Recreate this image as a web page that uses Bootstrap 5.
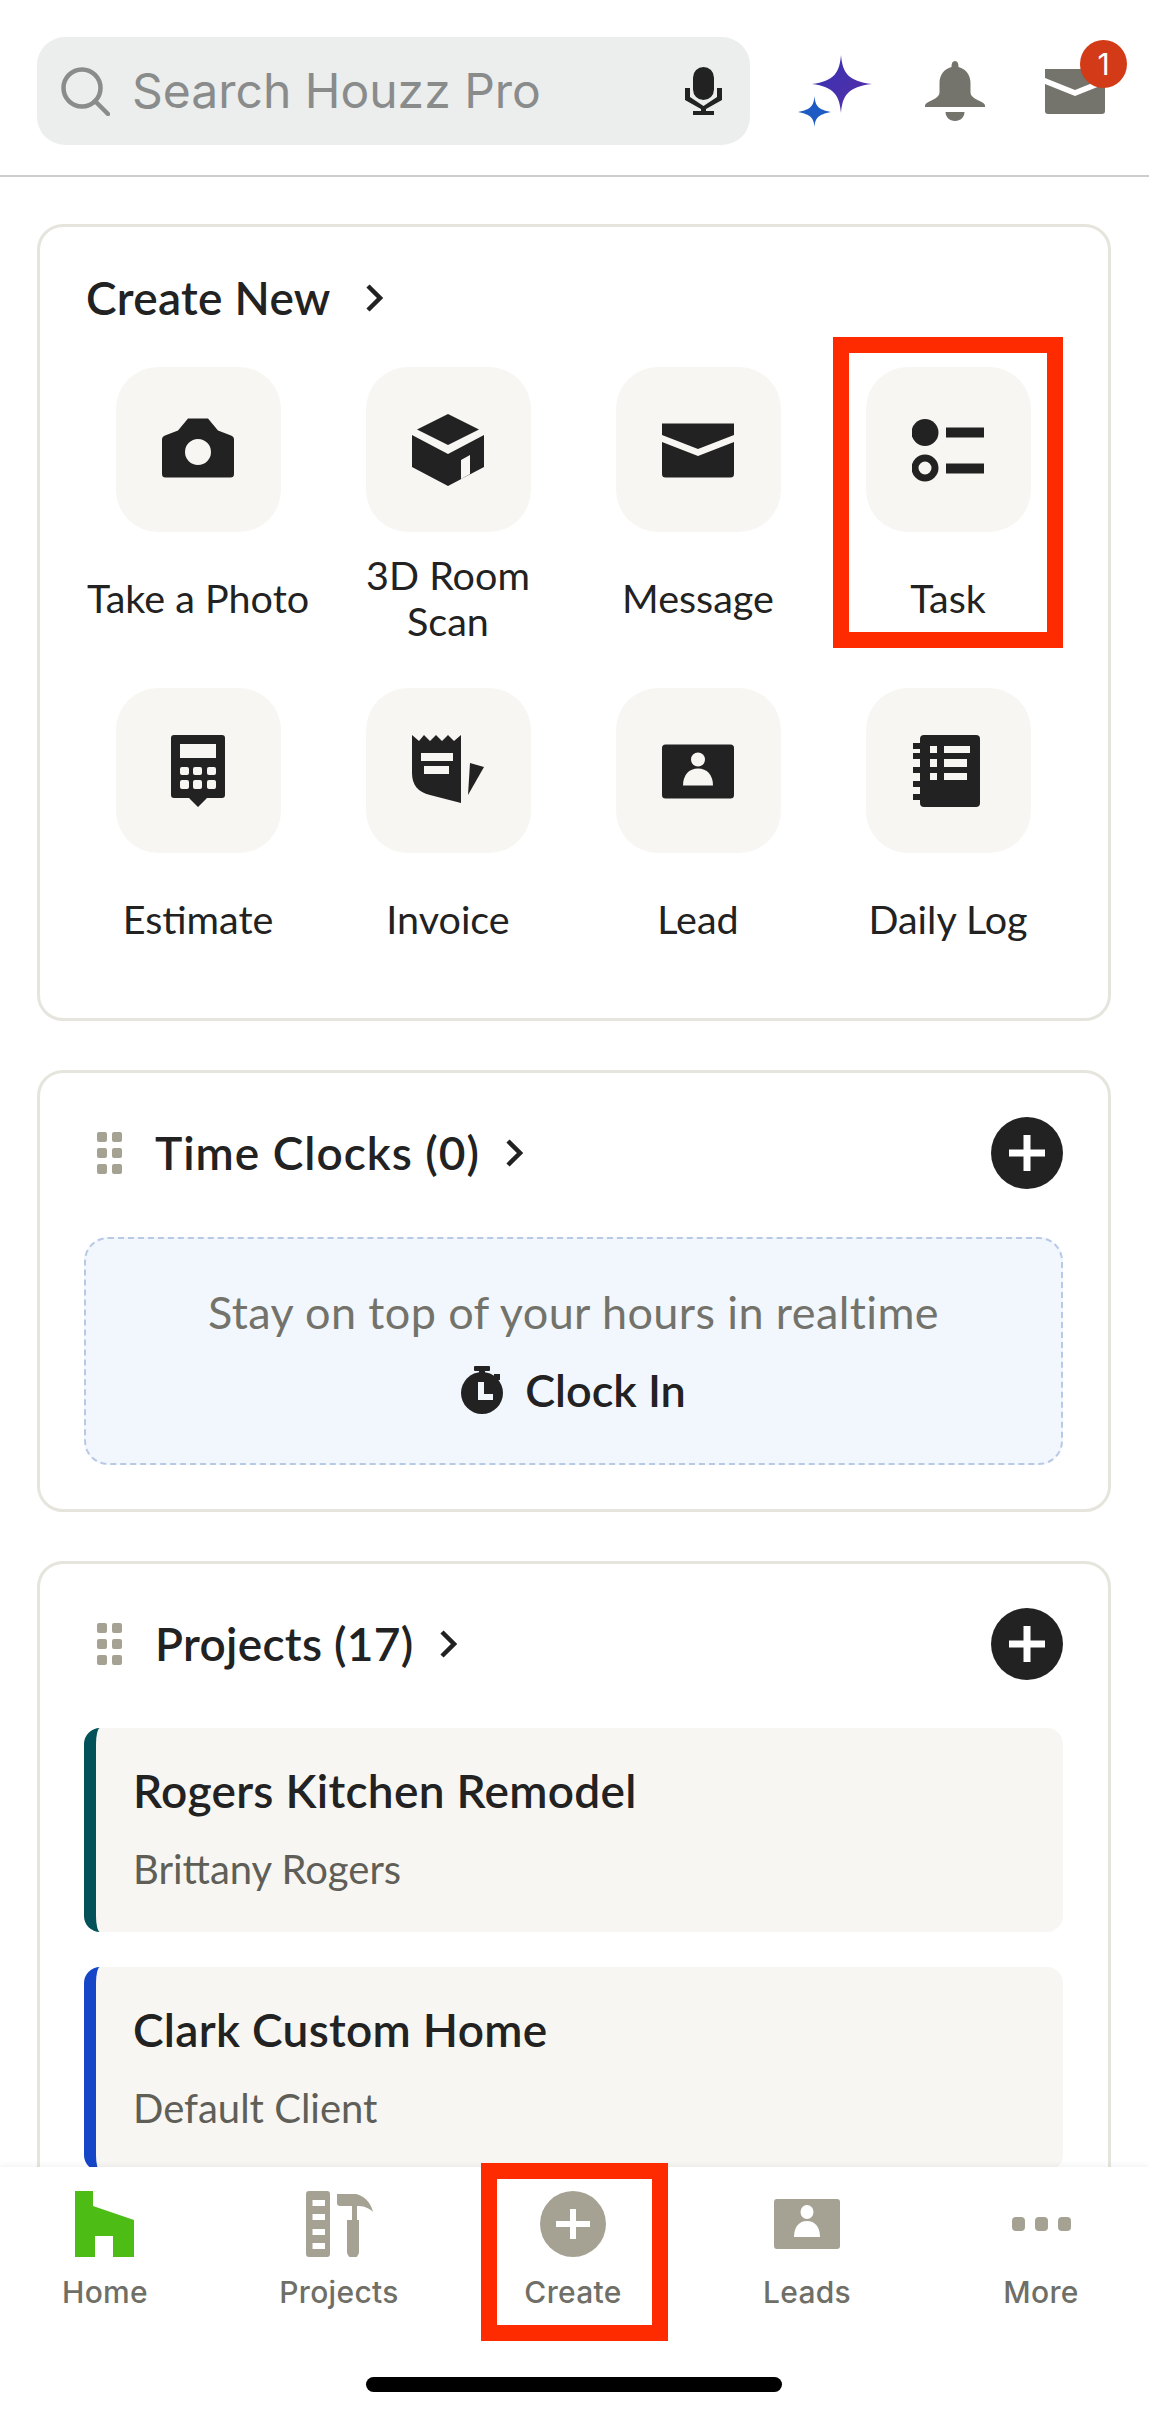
<!DOCTYPE html>
<html lang="en">
<head>
    <meta charset="UTF-8">
    <meta name="viewport" content="width=device-width, initial-scale=1.0">
    <title>Houzz Pro Home</title>
    <link href="https://cdn.jsdelivr.net/npm/bootstrap@5.3.2/dist/css/bootstrap.min.css" rel="stylesheet">
    <style>
        body {
            background-color: #fff;
            color: #222;
            font-family: "Lato", "Liberation Sans", sans-serif;
        }
        .app-shell {
            width: 1149px;
            height: 2409px;
            overflow: hidden;
        }
        /* top bar */
        .top-bar {
            padding: 37px 0 30px 37px;
            border-bottom: 2px solid #cdcdcd;
        }
        .search-box {
            width: 713px;
            height: 108px;
            padding: 0 28px 0 24px;
            background-color: #eceeee;
            border-radius: 28px;
            color: #8a8b8b;
            font-family: "Inter", sans-serif;
            font-size: 48px;
        }
        .search-text { margin-left: 22px; }
        .spark-icon { margin-left: 48px; }
        .bell-icon { margin-left: 53px; }
        .mail-wrap { margin-left: 60px; width: 60px; height: 45px; }
        .mail-wrap svg { display: block; }
        .mail-badge {
            top: -29px;
            left: 35px;
            width: 47px;
            height: 48px;
            background-color: #d33a17;
            color: #fff;
            font-family: "Inter", sans-serif;
            font-size: 30px;
            line-height: 48px;
        }
        /* cards */
        .page-body {
            padding: 47px 38px 0 37px;
            gap: 49px;
        }
        .home-card {
            border: 3px solid #e6e5dd;
            border-radius: 26px;
            flex-shrink: 0;
        }
        .create-card { padding: 41px 44px 9px; }
        .widget-card { padding: 44px 45px 44px 44px; }
        .card-heading {
            font-size: 46px;
            font-weight: 600;
            line-height: 60px;
            letter-spacing: .3px;
            color: #222;
        }
        .clock-heading { letter-spacing: 1px; }
        .create-head { margin-left: 2px; height: 60px; }
        .create-head svg { margin-left: 34px; }
        .action-grid { width: 1000px; margin: 39px 0 0 -11px; }
        .action-item { width: 250px; height: 321px; }
        .action-tile {
            width: 165px;
            height: 165px;
            background-color: #f7f6f2;
            border-radius: 42px;
        }
        .action-label {
            height: 92px;
            margin-top: 20px;
            font-size: 39.5px;
            line-height: 46px;
            text-align: center;
            color: #222;
        }
        .task-mark {
            top: -30px;
            left: 10px;
            width: 230px;
            height: 311px;
            border: 16px solid #ff2b00;
        }
        .grip-icon { margin: 0 33px 0 13px; }
        .head-chevron { margin-left: 25px; }
        .add-btn {
            width: 72px;
            height: 72px;
            padding: 0;
            background-color: #222;
            border: 0;
        }
        .add-btn svg { display: block; margin: auto; }
        .clock-panel {
            height: 228px;
            margin-top: 48px;
            background-color: #f2f7fe;
            border: 2px dashed #b8c9e6;
            border-radius: 24px;
        }
        .clock-hint {
            font-size: 45px;
            line-height: 56px;
            color: #73736b;
            letter-spacing: .4px;
        }
        .clock-in {
            margin-top: 22px;
            font-size: 45px;
            font-weight: 600;
            line-height: 56px;
            gap: 22px;
        }
        .project-row {
            height: 204px;
            margin-top: 48px;
            padding: 33px 37px;
            background-color: #f7f6f2;
            border-left: 12px solid #03525a;
            border-radius: 16px;
        }
        .project-row + .project-row { margin-top: 35px; border-left-color: #1646c8; }
        .project-name {
            font-size: 46px;
            font-weight: 600;
            line-height: 60px;
            letter-spacing: .3px;
        }
        .project-client {
            margin-top: 25px;
            font-size: 40px;
            line-height: 46px;
            color: #5f5f58;
        }
        /* bottom nav */
        .tab-bar {
            height: 242px;
            padding: 24px 48px 0 45px;
            background-color: #fff;
            box-shadow: 0 -2px 6px rgba(0, 0, 0, .05);
        }
        .tab-item { width: 120px; height: 120px; }
        .tab-glyph { height: 66px; }
        .tab-label {
            margin-top: 17px;
            font-family: "Inter", sans-serif;
            font-size: 30px;
            font-weight: 500;
            line-height: 36px;
            letter-spacing: .3px;
            color: #6f6f67;
        }
        .tab-item .tab-label { white-space: nowrap; }
        .create-mark {
            top: -28px;
            left: -32px;
            width: 187px;
            height: 178px;
            border: 16px solid #ff2b00;
        }
        .home-indicator {
            position: absolute;
            left: 366px;
            bottom: 17px;
            width: 416px;
            height: 15px;
            background-color: #000;
            border-radius: 8px;
        }
    </style>
</head>
<body>
<div class="app-shell position-relative">

    <div class="top-bar d-flex align-items-center">
        <div class="search-box d-flex align-items-center">
            <svg width="49" height="49" viewBox="0 0 49 49" fill="none" stroke="#8a8b8b" stroke-width="4.5" stroke-linecap="round"><circle cx="21" cy="21" r="18.5"/><path d="M34 34 47 47"/></svg>
            <span class="search-text flex-grow-1">Search Houzz Pro</span>
            <svg width="37" height="48" viewBox="0 0 37 48" fill="#222"><rect x="8" y="0" width="21" height="33" rx="10.5"/><path d="M0 21h5v9l13.500 9 13.500-9v-9h5v12L21 42v2h8v4H8v-4h8v-2L0 33z"/></svg>
        </div>
        <svg class="spark-icon" width="74" height="72" viewBox="0 0 74 72">
            <defs><linearGradient id="sparkFill" x1="0" y1="0" x2="1" y2="1"><stop offset="0" stop-color="#3433b4"/><stop offset="1" stop-color="#5a2da6"/></linearGradient></defs>
            <path fill="url(#sparkFill)" d="M43 0C44.500 18 50 26 74 29 50 32 44.500 40 43 58 41.500 40 36 32 14 29 36 26 41.500 18 43 0Z"/>
            <path fill="#1e5bc4" d="M16.500 41C17.300 51 20 54.500 33 57 20 59.500 17.300 63 16.500 72 15.700 63 13 59.500 0 57 13 54.500 15.700 51 16.500 41Z"/>
        </svg>
        <svg class="bell-icon" width="60" height="60" viewBox="0 0 60 60" fill="#75746c">
            <path d="M30 0c2.500 0 3.500 2 3.500 6 7.500 2 12 8 12 16v9c0 4 3 6 8 8.500 4 2 6.500 3 6.500 5V46H0v-1.500c0-2 2.500-3 6.500-5 5-2.500 8-4.500 8-8.500v-9c0-8 4.500-14 12-16 0-4 1-6 3.500-6Z"/>
            <path d="M20.500 51h19c0 5-4 9-9.500 9s-9.500-4-9.500-9Z"/>
        </svg>
        <div class="mail-wrap position-relative">
            <svg width="60" height="45" viewBox="0 0 60 45" fill="#75746c"><path d="M0 0h60v9L30 21 0 9z"/><path d="M0 15l30 12 30-12v27a3 3 0 0 1-3 3H3a3 3 0 0 1-3-3z"/></svg>
            <span class="mail-badge position-absolute rounded-circle text-center">1</span>
        </div>
    </div>

    <div class="page-body d-flex flex-column">

        <div class="card home-card create-card">
            <div class="create-head d-flex align-items-center card-heading">
                Create New
                <svg width="18" height="28" viewBox="0 0 18 28" fill="none" stroke="#222" stroke-width="4.500"><path d="M3 2l12 12L3 26"/></svg>
            </div>
            <div class="row g-0 action-grid">
                <div class="col-auto action-item position-relative d-flex flex-column align-items-center">
                    <div class="action-tile d-flex align-items-center justify-content-center">
                        <svg width="72" height="72" viewBox="0 0 72 72" fill="#222"><path fill-rule="evenodd" d="M26 4.500h20l10 12 13 5c2 .8 3 2 3 4V60a3.500 3.500 0 0 1-3.500 3.500h-65A3.500 3.500 0 0 1 0 60V25.500c0-2 1-3.200 3-4l13-5ZM36 25a13 13 0 1 0 0 26 13 13 0 0 0 0-26Z"/></svg>
                    </div>
                    <div class="action-label d-flex align-items-center">Take a Photo</div>
                </div>
                <div class="col-auto action-item position-relative d-flex flex-column align-items-center">
                    <div class="action-tile d-flex align-items-center justify-content-center">
                        <svg width="72" height="72" viewBox="0 0 72 72" fill="#222"><path d="M36 0 67 15.500 36 31 5 15.500Z"/><path fill-rule="evenodd" d="M0 21 36 40 72 21V53L36 72 0 53ZM49 46V65L58 60V41Z"/></svg>
                    </div>
                    <div class="action-label d-flex align-items-center">3D Room<br>Scan</div>
                </div>
                <div class="col-auto action-item position-relative d-flex flex-column align-items-center">
                    <div class="action-tile d-flex align-items-center justify-content-center">
                        <svg width="72" height="72" viewBox="0 0 72 72" fill="#222"><path d="M0 9.500h72V21L36 35 0 21Z"/><path d="M0 28 36 42 72 28V60a3.500 3.500 0 0 1-3.500 3.500h-65A3.500 3.500 0 0 1 0 60Z"/></svg>
                    </div>
                    <div class="action-label d-flex align-items-center">Message</div>
                </div>
                <div class="col-auto action-item position-relative d-flex flex-column align-items-center">
                    <div class="action-tile d-flex align-items-center justify-content-center">
                        <svg width="72" height="72" viewBox="0 0 72 72" fill="#222"><circle cx="13" cy="18.500" r="13.500"/><rect x="34" y="13.500" width="38" height="10"/><circle cx="13" cy="54" r="10" fill="none" stroke="#222" stroke-width="7"/><rect x="34" y="49.500" width="38" height="10"/></svg>
                    </div>
                    <div class="action-label d-flex align-items-center">Task</div>
                    <div class="task-mark position-absolute"></div>
                </div>
                <div class="col-auto action-item position-relative d-flex flex-column align-items-center">
                    <div class="action-tile d-flex align-items-center justify-content-center">
                        <svg width="72" height="72" viewBox="0 0 72 72"><path fill="#222" d="M12 0h48a3 3 0 0 1 3 3v57a3 3 0 0 1-3 3H45l-9 9-9-9H12a3 3 0 0 1-3-3V3a3 3 0 0 1 3-3Z"/><g fill="#f7f6f2"><rect x="18" y="9" width="36" height="14"/><rect x="18" y="32" width="9" height="8" rx="2"/><rect x="31" y="32" width="9" height="8" rx="2"/><rect x="45" y="32" width="9" height="8" rx="2"/><rect x="18" y="45" width="9" height="9" rx="2"/><rect x="31" y="45" width="9" height="9" rx="2"/><rect x="45" y="45" width="9" height="9" rx="2"/></g></svg>
                    </div>
                    <div class="action-label d-flex align-items-center">Estimate</div>
                </div>
                <div class="col-auto action-item position-relative d-flex flex-column align-items-center">
                    <div class="action-tile d-flex align-items-center justify-content-center">
                        <svg width="72" height="72" viewBox="0 0 72 72"><path fill="#222" d="M0 0 7 6 12 0 18 6 24 0 30 6 36 0 42 6 49 0V68L18 60C6 57 0 50 0 38Z"/><path fill="#222" d="M58 28 72 32 56 60Z"/><rect x="9" y="18" width="32" height="8" fill="#f7f6f2"/><rect x="12" y="31" width="25" height="8" fill="#f7f6f2"/></svg>
                    </div>
                    <div class="action-label d-flex align-items-center">Invoice</div>
                </div>
                <div class="col-auto action-item position-relative d-flex flex-column align-items-center">
                    <div class="action-tile d-flex align-items-center justify-content-center">
                        <svg width="72" height="72" viewBox="0 0 72 72"><rect y="9.500" width="72" height="54" rx="3.500" fill="#222"/><ellipse cx="36" cy="24.500" rx="7" ry="7" fill="#f7f6f2"/><path fill="#f7f6f2" d="M21 50.500C21 40 27 33.500 36 33.500S51 40 51 50.500Z"/></svg>
                    </div>
                    <div class="action-label d-flex align-items-center">Lead</div>
                </div>
                <div class="col-auto action-item position-relative d-flex flex-column align-items-center">
                    <div class="action-tile d-flex align-items-center justify-content-center">
                        <svg width="72" height="72" viewBox="0 0 72 72"><path fill="#222" d="M12 0h52a4 4 0 0 1 4 4v64a4 4 0 0 1-4 4H12a4 4 0 0 1-4-4V4a4 4 0 0 1 4-4Z"/><g fill="#222"><rect x="1" y="8" width="10" height="6"/><rect x="1" y="18" width="10" height="6"/><rect x="1" y="32" width="10" height="6"/><rect x="1" y="46" width="10" height="6"/><rect x="1" y="59" width="10" height="6"/></g><g fill="#f7f6f2"><rect x="18" y="11" width="7" height="7"/><rect x="32" y="11" width="26" height="7"/><rect x="18" y="24" width="7" height="8"/><rect x="32" y="24" width="23" height="8"/><rect x="18" y="38" width="7" height="7"/><rect x="32" y="38" width="23" height="7"/></g></svg>
                    </div>
                    <div class="action-label d-flex align-items-center">Daily Log</div>
                </div>
            </div>
        </div>

        <div class="card home-card widget-card">
            <div class="d-flex align-items-center">
                <svg class="grip-icon" width="25" height="42" viewBox="0 0 25 42" fill="#a5a294"><rect width="10" height="10" rx="2"/><rect x="15" width="10" height="10" rx="2"/><rect y="16" width="10" height="10" rx="2"/><rect x="15" y="16" width="10" height="10" rx="2"/><rect y="32" width="10" height="10" rx="2"/><rect x="15" y="32" width="10" height="10" rx="2"/></svg>
                <span class="card-heading clock-heading">Time Clocks (0)</span>
                <svg class="head-chevron" width="18" height="28" viewBox="0 0 18 28" fill="none" stroke="#222" stroke-width="4.500"><path d="M3 2l12 12L3 26"/></svg>
                <button class="btn add-btn rounded-circle ms-auto" type="button"><svg width="38" height="38" viewBox="0 0 38 38" fill="none" stroke="#fff" stroke-width="7"><path d="M19 1v36M1 19h36"/></svg></button>
            </div>
            <div class="clock-panel d-flex flex-column align-items-center justify-content-center">
                <div class="clock-hint">Stay on top of your hours in realtime</div>
                <div class="clock-in d-flex align-items-center">
                    <svg width="42" height="48" viewBox="0 0 42 48"><g fill="#222"><rect x="13" width="16" height="5" rx="1"/><rect x="18" y="4" width="6" height="5"/><circle cx="21" cy="27" r="21"/><path d="M33 8l6 0 0 6-6 0Z"/></g><path d="M17 16h6v12h9v6H17Z" fill="#f2f7fe"/></svg>
                    <span>Clock In</span>
                </div>
            </div>
        </div>

        <div class="card home-card widget-card">
            <div class="d-flex align-items-center">
                <svg class="grip-icon" width="25" height="42" viewBox="0 0 25 42" fill="#a5a294"><rect width="10" height="10" rx="2"/><rect x="15" width="10" height="10" rx="2"/><rect y="16" width="10" height="10" rx="2"/><rect x="15" y="16" width="10" height="10" rx="2"/><rect y="32" width="10" height="10" rx="2"/><rect x="15" y="32" width="10" height="10" rx="2"/></svg>
                <span class="card-heading">Projects (17)</span>
                <svg class="head-chevron" width="18" height="28" viewBox="0 0 18 28" fill="none" stroke="#222" stroke-width="4.500"><path d="M3 2l12 12L3 26"/></svg>
                <button class="btn add-btn rounded-circle ms-auto" type="button"><svg width="38" height="38" viewBox="0 0 38 38" fill="none" stroke="#fff" stroke-width="7"><path d="M19 1v36M1 19h36"/></svg></button>
            </div>
            <div class="project-row">
                <div class="project-name">Rogers Kitchen Remodel</div>
                <div class="project-client">Brittany Rogers</div>
            </div>
            <div class="project-row">
                <div class="project-name">Clark Custom Home</div>
                <div class="project-client">Default Client</div>
            </div>
        </div>
    </div>

    <nav class="tab-bar position-absolute bottom-0 start-0 end-0 d-flex justify-content-between align-items-start">
        <div class="tab-item position-relative d-flex flex-column align-items-center">
            <div class="tab-glyph"><svg width="60" height="66" viewBox="0 0 60 66" fill="#4dbc15"><path d="M0 0H18V15L59 29V66H38V45H20V66H0Z"/></svg></div>
            <div class="tab-label">Home</div>
        </div>
        <div class="tab-item position-relative d-flex flex-column align-items-center">
            <div class="tab-glyph"><svg width="67" height="66" viewBox="0 0 67 66"><path fill="#a5a294" fill-rule="evenodd" d="M3 0H21a3 3 0 0 1 3 3V63a3 3 0 0 1-3 3H3a3 3 0 0 1-3-3V3a3 3 0 0 1 3-3ZM6.500 9v6H19V9ZM6.500 23v6H19V23ZM6.500 38v6H19V38ZM6.500 52v6H19V52Z"/><path fill="#a5a294" d="M31 3H50C59 5 65 12 67 21 62 16 57 15 51 15V29H53V61a6 6 0 0 1-12 0V29H46V15H34C32 15 31 14 31 12Z"/></svg></div>
            <div class="tab-label">Projects</div>
        </div>
        <div class="tab-item position-relative d-flex flex-column align-items-center">
            <div class="tab-glyph"><svg width="66" height="66" viewBox="0 0 66 66"><circle cx="33" cy="33" r="33" fill="#a5a294"/><path d="M33 18v30M16 33h34" stroke="#fff" stroke-width="6"/></svg></div>
            <div class="tab-label">Create</div>
            <div class="create-mark position-absolute"></div>
        </div>
        <div class="tab-item position-relative d-flex flex-column align-items-center">
            <div class="tab-glyph d-flex align-items-center"><svg width="66" height="50" viewBox="0 0 66 50"><rect width="66" height="50" rx="3" fill="#a5a294"/><ellipse cx="33" cy="13" rx="6.500" ry="7" fill="#fff"/><path fill="#fff" d="M20 38C20 28 25 22 33 22S46 28 46 38Z"/></svg></div>
            <div class="tab-label">Leads</div>
        </div>
        <div class="tab-item position-relative d-flex flex-column align-items-center">
            <div class="tab-glyph d-flex align-items-center"><svg width="59" height="14" viewBox="0 0 59 14" fill="#a5a294"><rect width="13" height="14" rx="4"/><rect x="23" width="13" height="14" rx="4"/><rect x="46" width="13" height="14" rx="4"/></svg></div>
            <div class="tab-label">More</div>
        </div>
    </nav>
    <div class="home-indicator"></div>
</div>
<script src="https://cdn.jsdelivr.net/npm/bootstrap@5.3.2/dist/js/bootstrap.bundle.min.js"></script>
</body>
</html>
